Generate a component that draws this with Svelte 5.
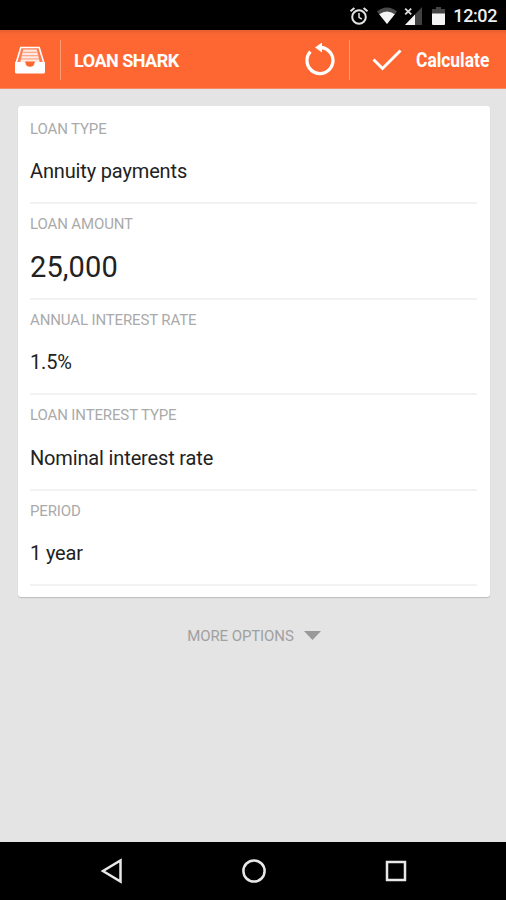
<script lang="ts">
	interface Field {
		label: string;
		value: string;
		large?: boolean;
	}

	let fields: Field[] = [
		{ label: "Loan type", value: "Annuity payments" },
		{ label: "Loan amount", value: "25,000", large: true },
		{ label: "Annual interest rate", value: "1.5%" },
		{ label: "Loan interest type", value: "Nominal interest rate" },
		{ label: "Period", value: "1 year" },
	]
</script>

<div class="screen">
	<div class="status">
		<svg class="alarm" width="20" height="20" viewBox="0 0 20 20" fill="none" stroke="#e4e4e4">
			<circle cx="10" cy="11" r="6.8" stroke-width="2" />
			<path d="M10 7v4.3l2.8 1.9" stroke-width="1.5" />
			<path d="M1.5 5.2L5.4 2M18.5 5.2L14.6 2" stroke-width="2" />
		</svg>
		<svg class="wifi" width="20" height="17" viewBox="0 0 20 17">
			<path d="M0 4.5Q10-3.5 20 4.5L10 17z" fill="#4a4a4a" />
			<path d="M2.2 7.3Q10 1.5 17.8 7.3L10 17z" fill="#f4f4f4" />
		</svg>
		<svg class="signal" width="19" height="18" viewBox="0 0 19 18">
			<path d="M18 0v18H1z" fill="#414141" />
			<path d="M11 7.5V18H1z" fill="#f4f4f4" />
			<path d="M1 1.5l6.5 6M7.5 1.5L1 7.5" stroke="#000" stroke-width="4" />
			<path d="M1.2 1.7l6 5.6M7.2 1.7l-6 5.6" stroke="#e0e0e0" stroke-width="1.8" />
		</svg>
		<svg class="battery" width="13" height="18" viewBox="0 0 13 18">
			<path d="M4 0h5v2h4v5H0V2h4z" fill="#444" />
			<path d="M0 6.5h13V17q0 1-1 1H1q-1 0-1-1z" fill="#f4f4f4" />
		</svg>
		<span class="time">12:02</span>
	</div>

	<header class="toolbar">
		<svg class="logo" width="32" height="28" viewBox="0 0 32 28">
			<path d="M6.8 1.5h18.4L30 17.5H2z" fill="#ff7b50" stroke="#fff" stroke-width="1.6" />
			<path d="M9.3 3.5h13.4l3 12.5H6.3z" fill="#ffe9e1" />
			<path d="M8.5 6.3h15M7.8 9.6h16.400M7 12.900h18" stroke="#ffa98b" stroke-width="1.2" />
			<path d="M1 16h9.8c.4 3 2.5 4.8 5.2 4.8s4.800-1.800 5.200-4.800H31v10q0 1.500-1.500 1.500h-27Q1 27.500 1 26z" fill="#fff" />
			<path d="M11.300 15.500h9.400c-.4 3.300-2 4.800-4.700 4.800s-4.300-1.500-4.700-4.800z" fill="#ff6732" />
		</svg>
		<span class="divider"></span>
		<h1>LOAN SHARK</h1>
		<button class="reset" aria-label="Reset">
			<svg width="32" height="34" viewBox="0 0 32 34">
				<path d="M16 4.500A13 13 0 1 1 6.400 8.700" fill="none" stroke="#fff" stroke-width="3.300" />
				<path d="M11 4.500L18 -.5v10z" fill="#fff" />
			</svg>
		</button>
		<span class="divider"></span>
		<button class="calculate">
			<svg width="30" height="22" viewBox="0 0 30 22">
				<path d="M1.500 10.500l9 9L28.500 1.500" fill="none" stroke="#fff" stroke-width="2.900" />
			</svg>
			<span>Calculate</span>
		</button>
	</header>

	<main>
		<div class="card">
			{#each fields as field}
				<div class="field">
					<span class="label">{field.label}</span>
					<span class="value" class:large={field.large}>{field.value}</span>
				</div>
			{/each}
		</div>
		<button class="more">
			<span>MORE OPTIONS</span>
			<svg width="17" height="9" viewBox="0 0 17 9">
				<path d="M0 0h17L8.500 9z" fill="#999" />
			</svg>
		</button>
	</main>

	<nav>
		<svg width="24" height="26" viewBox="0 0 24 26">
			<path d="M20.500 2.500v21L3 13z" />
		</svg>
		<svg width="26" height="26" viewBox="0 0 26 26">
			<circle cx="13" cy="13" r="10.600" />
		</svg>
		<svg width="24" height="24" viewBox="0 0 24 24">
			<rect x="3" y="3" width="18" height="18" />
		</svg>
	</nav>
</div>

<style>
	:global(body) {
		margin: 0;
		background: #000;
	}

	.screen {
		display: flex;
		flex-direction: column;
		width: 506px;
		height: 900px;
		overflow: hidden;
		background: #e4e4e4;
		font-family: Roboto, "Liberation Sans", sans-serif;
	}

	button {
		display: flex;
		align-items: center;
		margin: 0;
		padding: 0;
		border: 0;
		background: none;
		font-family: inherit;
	}

	svg {
		display: block;
		flex: none;
	}

	.status {
		display: flex;
		align-items: center;
		justify-content: flex-end;
		box-sizing: border-box;
		height: 30px;
		padding: 1px 9px 0 0;
		background: #000;
	}

	.wifi {
		margin-left: 8px;
	}

	.signal {
		margin-left: 7px;
	}

	.battery {
		margin-left: 9px;
	}

	.time {
		margin-left: 8px;
		color: #eee;
		font-size: 18px;
		font-weight: 500;
		letter-spacing: -0.4px;
		line-height: 28px;
	}

	.toolbar {
		display: flex;
		align-items: center;
		box-sizing: border-box;
		height: 59px;
		padding: 1px 16px 0 14px;
		background: linear-gradient(#e95f30, #fb6733 5px, #ff6732 12px);
		border-bottom: 1px solid #f58a65;
		color: #fff;
	}

	.divider {
		width: 1px;
		height: 40px;
		background: #ff9c78;
	}

	.logo {
		margin-right: 14px;
	}

	h1 {
		flex: 1;
		margin: 0 0 0 13px;
		padding-top: 1px;
		font-size: 18px;
		font-weight: 700;
		letter-spacing: -0.5px;
	}

	.reset {
		margin-right: 13px;
	}

	.calculate {
		margin-left: 22px;
		gap: 14px;
		color: #fff;
		font-size: 20px;
		font-weight: 700;
	}

	/* narrow bold lettering */
	.calculate span {
		width: 74px;
		padding-top: 1px;
		text-align: left;
		transform: scaleX(0.87);
		transform-origin: left;
	}

	main {
		flex: 1;
		padding: 17px 16px 0 18px;
	}

	.card {
		padding: 3px 13px 11px 12px;
		border-radius: 3px;
		background: #fff;
		box-shadow: 0 1px 1px #bdbdbd;
	}

	.field {
		display: flex;
		flex-direction: column;
		box-sizing: border-box;
		height: 95.4px;
		padding-top: 10px;
		border-bottom: 2px solid #f2f2f2;
	}

	.label {
		color: #aaa;
		font-size: 15px;
		letter-spacing: -0.13px;
		line-height: 20px;
		text-transform: uppercase;
	}

	.value {
		margin-top: 9.4px;
		color: #222;
		font-size: 20px;
		letter-spacing: -0.15px;
		line-height: 46px;
	}

	.large {
		font-size: 29px;
		letter-spacing: 0.1px;
	}

	.more {
		margin: 28px auto 0;
		gap: 10px;
		color: #a0a0a0;
		font-size: 15px;
		letter-spacing: -0.1px;
		line-height: 22px;
	}

	nav {
		display: flex;
		align-items: center;
		justify-content: space-between;
		box-sizing: border-box;
		height: 58px;
		padding: 0 98px 0 100px;
		background: #000;
	}

	nav svg {
		fill: none;
		stroke: #e8e8e8;
		stroke-width: 2.5;
	}
</style>
